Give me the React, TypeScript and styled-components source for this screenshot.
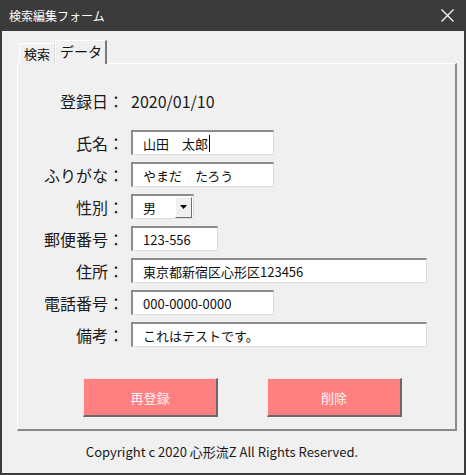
import { FC } from "react";
import styled, { createGlobalStyle } from "styled-components";

const GlobalStyle = createGlobalStyle`
	html, body {
		margin: 0;
		padding: 0;
		background: #f0f0f0;
	}
	* {
		box-sizing: border-box;
	}
`;

const JP_FONT = `"Noto Sans CJK JP", "Noto Sans", sans-serif`;

const StyledWindow = styled.div`
	width: 466px;
	height: 475px;
	display: flex;
	flex-direction: column;
	background: #f0f0f0;
	border-left: 2px solid #3a3a3a;
	border-right: 2px solid #3a3a3a;
	border-bottom: 2px solid #3a3a3a;
	font-family: ${JP_FONT};
	color: #1a1a1a;
	overflow: hidden;
`;

const StyledTitleBar = styled.div`
	height: 31px;
	margin: 0 -2px;
	padding: 0 10px 0 9px;
	display: flex;
	align-items: center;
	justify-content: space-between;
	background: #3b3b3b;
	color: #ffffff;
	font-size: 12px;
	flex-shrink: 0;
`;

const StyledClose = styled.div`
	width: 16px;
	height: 16px;
	display: flex;
	align-items: center;
	justify-content: center;
	margin-right: 1px;
`;

const StyledBody = styled.div`
	padding: 9px 0 0 15px;
	display: flex;
	flex-direction: column;
`;

const StyledTabs = styled.div`
	display: flex;
	align-items: flex-end;
	padding-left: 2px;
	height: 24px;
	position: relative;
	z-index: 1;
	margin-bottom: -1px;
`;

interface ITabProps {
	$active?: boolean;
}

const StyledTab = styled.div<ITabProps>`
	display: flex;
	align-items: center;
	justify-content: center;
	background: #f0f0f0;
	border-top: 1px solid #ffffff;
	border-left: 1px solid #ffffff;
	border-right: ${({ $active }) => ($active ? "2px solid #7a7a7a" : "1px solid #d8d8d8")};
	height: ${({ $active }) => ($active ? "24px" : "21px")};
	padding: ${({ $active }) => ($active ? "0 3px 3px 4px" : "0 4px 1px 4px")};
	font-size: ${({ $active }) => ($active ? "14px" : "13px")};
	color: #111;
`;

const StyledPanel = styled.div`
	width: 440px;
	height: 368px;
	border-top: 1px solid #ffffff;
	border-left: 1px solid #ffffff;
	border-right: 2px solid #8a8a8a;
	border-bottom: 2px solid #8a8a8a;
	padding-top: 24px;
	display: flex;
	flex-direction: column;
`;

const StyledForm = styled.div`
	display: grid;
	grid-template-columns: 106px 1fr;
	column-gap: 7px;
	row-gap: 7px;
	align-items: center;
`;

const StyledLabel = styled.div`
	height: 25px;
	display: flex;
	align-items: center;
	justify-content: flex-end;
	font-size: 16px;
	white-space: nowrap;
	color: #1a1a1a;
`;

const StyledDate = styled.div`
	height: 25px;
	display: flex;
	align-items: center;
	font-size: 16px;
	color: #1a1a1a;
`;

const StyledSpacer = styled.div`
	grid-column: 1 / span 2;
	height: 3px;
`;

interface IFieldProps {
	$width: number;
}

const StyledField = styled.div<IFieldProps>`
	width: ${({ $width }) => $width}px;
	height: 25px;
	background: #ffffff;
	border-top: 2px solid #8c8c8c;
	border-left: 2px solid #8c8c8c;
	border-right: 1px solid #dcdcdc;
	border-bottom: 1px solid #dcdcdc;
	padding-left: 10px;
	display: flex;
	align-items: center;
	font-size: 13px;
	color: #111;
	white-space: pre;
`;

const StyledCaret = styled.span`
	display: inline-block;
	width: 1px;
	height: 17px;
	background: #000;
	margin-left: 1px;
`;

const StyledSelect = styled(StyledField)`
	padding-right: 1px;
	justify-content: space-between;
`;

const StyledDropButton = styled.div`
	width: 17px;
	height: 21px;
	background: #f0f0f0;
	border-top: 1px solid #ffffff;
	border-left: 1px solid #ffffff;
	border-right: 1px solid #6e6e6e;
	border-bottom: 1px solid #6e6e6e;
	display: flex;
	align-items: center;
	justify-content: center;
`;

const StyledButtons = styled.div`
	display: flex;
	gap: 49px;
	padding-left: 65px;
	margin-top: 31px;
`;

const StyledButton = styled.div`
	width: 135px;
	height: 39px;
	background: #ff8080;
	border-top: 1px solid #f4e4e4;
	border-left: 1px solid #f4e4e4;
	border-right: 2px solid #6a6a6a;
	border-bottom: 2px solid #6a6a6a;
	display: flex;
	align-items: center;
	justify-content: center;
	color: #fff4f4;
	font-size: 13px;
`;

const StyledFooter = styled.div`
	flex: 1;
	display: flex;
	align-items: center;
	justify-content: center;
	padding-right: 22px;
	padding-bottom: 2px;
	font-size: 13px;
	color: #1a1a1a;
`;

type TypeRow = {
	label: string;
	value: string;
	width: number;
	caret?: boolean;
	select?: boolean;
};

const rows: TypeRow[] = [
	{ label: "氏名：", value: "山田　太郎", width: 143, caret: true },
	{ label: "ふりがな：", value: "やまだ　たろう", width: 143 },
	{ label: "性別：", value: "男", width: 63, select: true },
	{ label: "郵便番号：", value: "123-556", width: 87 },
	{ label: "住所：", value: "東京都新宿区心形区123456", width: 296 },
	{ label: "電話番号：", value: "000-0000-0000", width: 143 },
	{ label: "備考：", value: "これはテストです。", width: 296 },
];

const FormRow: FC<{ row: TypeRow }> = ({ row }) => {
	if (row.select) {
		return (
			<>
				<StyledLabel>{row.label}</StyledLabel>
				<StyledSelect $width={row.width}>
					{row.value}
					<StyledDropButton>
						<svg width="7" height="4" viewBox="0 0 7 4">
							<path d="M0 0 H7 L3.5 4 Z" fill="#000" />
						</svg>
					</StyledDropButton>
				</StyledSelect>
			</>
		);
	}
	return (
		<>
			<StyledLabel>{row.label}</StyledLabel>
			<div>
				<StyledField $width={row.width}>
					{row.value}
					{row.caret && <StyledCaret />}
				</StyledField>
			</div>
		</>
	);
};

export default function App() {
	return (
		<>
			<GlobalStyle />
			<StyledWindow>
				<StyledTitleBar>
					<span>検索編集フォーム</span>
					<StyledClose>
						<svg width="13" height="13" viewBox="0 0 13 13">
							<path
								d="M0.5 0.5 L12.5 12.5 M12.5 0.5 L0.5 12.5"
								stroke="#ffffff"
								strokeWidth="1.2"
							/>
						</svg>
					</StyledClose>
				</StyledTitleBar>
				<StyledBody>
					<StyledTabs>
						<StyledTab>検索</StyledTab>
						<StyledTab $active>データ</StyledTab>
					</StyledTabs>
					<StyledPanel>
						<StyledForm>
							<StyledLabel>登録日：</StyledLabel>
							<StyledDate>2020/01/10</StyledDate>
							<StyledSpacer />
							{rows.map((row) => (
								<FormRow key={row.label} row={row} />
							))}
						</StyledForm>
						<StyledButtons>
							<StyledButton>再登録</StyledButton>
							<StyledButton>削除</StyledButton>
						</StyledButtons>
					</StyledPanel>
				</StyledBody>
				<StyledFooter>Copyright c 2020 心形流Z All Rights Reserved.</StyledFooter>
			</StyledWindow>
		</>
	);
}
